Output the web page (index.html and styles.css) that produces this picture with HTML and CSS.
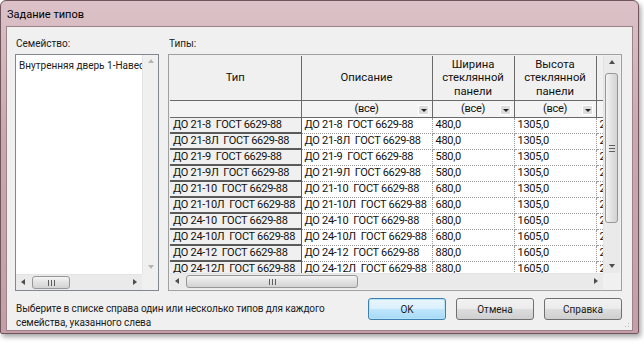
FILE: index.html
```html
<html>
  <head>
    <link rel="stylesheet" href="styles.css">
    <title>Задание типов</title>
  </head>
<body>
  <div class="window">
    <div class="titlebar">Задание типов</div>

    <div class="client">
      <div class="panes">

        <div class="family">
          <div class="label">Семейство:</div>
          <div class="listbox">
            <div class="list-items">
              <div class="list-item">Внутренняя дверь 1-Навесная</div>
            </div>
            <div class="vscroll off">
              <span class="arrow up"></span>
              <span class="track"></span>
              <span class="arrow down"></span>
            </div>
            <div class="hscroll">
              <span class="arrow left"></span>
              <span class="track"><span class="thumb" style="width: 38px"><span class="grip-v"></span></span></span>
              <span class="arrow right"></span>
            </div>
            <div class="corner"></div>
          </div>
        </div>

        <div class="types">
          <div class="label">Типы:</div>
          <div class="grid">
            <div class="grid-view">
              <table class="types-table">
                <colgroup>
                  <col class="c-type">
                  <col class="c-desc">
                  <col class="c-num">
                  <col class="c-num">
                  <col class="c-rest">
                </colgroup>
                <tr class="head">
                  <th>Тип</th>
                  <th>Описание</th>
                  <th>Ширина<br>стеклянной<br>панели</th>
                  <th>Высота<br>стеклянной<br>панели</th>
                  <th>Высота</th>
                </tr>
                <tr class="filter">
                  <td></td>
                  <td><span class="all">(все)</span><span class="drop"></span></td>
                  <td><span class="all">(все)</span><span class="drop"></span></td>
                  <td><span class="all">(все)</span><span class="drop"></span></td>
                  <td></td>
                </tr>
                <tbody id="rows"></tbody>
              </table>
            </div>
            <div class="vscroll">
              <span class="arrow up"></span>
              <span class="track"><span class="thumb-v"><span class="grip-h"></span></span></span>
              <span class="arrow down"></span>
            </div>
            <div class="hscroll">
              <span class="arrow left"></span>
              <span class="track"><span class="thumb" style="width: 172px"><span class="grip-v"></span></span></span>
              <span class="arrow right"></span>
            </div>
            <div class="corner"></div>
          </div>
        </div>

      </div>

      <div class="footer">
        <p class="hint">Выберите в списке справа один или несколько типов для каждого<br>семейства, указанного слева</p>
        <div class="buttons">
          <button class="btn default">OK</button>
          <button class="btn">Отмена</button>
          <button class="btn">Справка</button>
        </div>
      </div>
      <div class="sizegrip"></div>
    </div>
  </div>

  <script>
    // type rows: name, glass width, glass height, door height
    let types = [
      ["ДО 21-8", "480,0", "1305,0", "2071,0"],
      ["ДО 21-8Л", "480,0", "1305,0", "2071,0"],
      ["ДО 21-9", "580,0", "1305,0", "2071,0"],
      ["ДО 21-9Л", "580,0", "1305,0", "2071,0"],
      ["ДО 21-10", "680,0", "1305,0", "2071,0"],
      ["ДО 21-10Л", "680,0", "1305,0", "2071,0"],
      ["ДО 24-10", "680,0", "1605,0", "2371,0"],
      ["ДО 24-10Л", "680,0", "1605,0", "2371,0"],
      ["ДО 24-12", "880,0", "1605,0", "2371,0"],
      ["ДО 24-12Л", "880,0", "1605,0", "2371,0"]
    ];

    let rows = document.getElementById("rows");
    for (let t of types) {
      let name = t[0] + "\u00a0 ГОСТ 6629-88";
      let tr = document.createElement("tr");
      tr.innerHTML =
        "<td class='rowhead'>" + name + "</td>" +
        "<td>" + name + "</td>" +
        "<td>" + t[1] + "</td>" +
        "<td>" + t[2] + "</td>" +
        "<td>" + t[3] + "</td>";
      rows.appendChild(tr);
    }
  </script>
</body>
</html>
```

FILE: styles.css
```css
body {
  margin: 0;
  background: #ffffff;
  font-family: Roboto, "Liberation Sans", sans-serif;
  font-size: 10px;
  color: #1b1b1b;
}

.window {
  width: 637px;
  height: 332px;
  background: linear-gradient(180deg, #dcc2c8 0%, #cba7b0 40%, #c59ea8 100%);
  border: 1px solid #6f565d;
  border-radius: 6px 6px 2px 2px;
  box-shadow: 2px 3px 5px rgba(0, 0, 0, 0.35);
  display: flex;
  flex-direction: column;
}

.titlebar {
  height: 25px;
  line-height: 27px;
  padding-left: 6px;
  font-size: 11px;
  color: #000;
}

.client {
  position: relative;
  flex: 1;
  margin: 0 5px 5px 5px;
  background: #f0f0f0;
  border: 1px solid #9a8389;
  padding: 10px 10px 0 8px;
  display: flex;
  flex-direction: column;
}

.panes {
  display: flex;
  gap: 9px;
}

.label {
  height: 17px;
  padding-left: 1px;
  line-height: 14px;
}

.family {
  width: 144px;
}

.types {
  flex: 1;
}

/* list box */
.listbox {
  height: 235px;
  border: 1px solid #828790;
  background: #fff;
  display: grid;
  grid-template-columns: 1fr 16px;
  grid-template-rows: 1fr 16px;
}

.list-items {
  padding: 3px 3px;
  overflow: hidden;
  white-space: nowrap;
}

.list-item {
  line-height: 15px;
}

/* scrollbars */
.vscroll {
  background: #eaeaea;
  display: flex;
  flex-direction: column;
  border-left: 1px solid #e3e3e3;
}

.vscroll.off {
  background: #f0f0f0;
}

.hscroll {
  background: #eaeaea;
  display: flex;
  border-top: 1px solid #e3e3e3;
}

.corner {
  background: #f0f0f0;
}

.track {
  flex: 1;
  position: relative;
  display: flex;
}

.arrow {
  width: 16px;
  height: 16px;
  flex: none;
  position: relative;
}

.arrow::after {
  content: "";
  position: absolute;
  width: 0;
  height: 0;
  border: 3px solid transparent;
}

.arrow.up::after {
  left: 5px;
  top: 4px;
  border-bottom: 4px solid #4d4d4d;
  border-top-width: 0;
}

.arrow.down::after {
  left: 5px;
  top: 7px;
  border-top: 4px solid #4d4d4d;
  border-bottom-width: 0;
}

.arrow.left::after {
  left: 5px;
  top: 4px;
  border-right: 4px solid #4d4d4d;
  border-left-width: 0;
}

.arrow.right::after {
  left: 7px;
  top: 4px;
  border-left: 4px solid #4d4d4d;
  border-right-width: 0;
}

.vscroll.off .arrow.up::after {
  border-bottom-color: #b4b4b4;
}

.vscroll.off .arrow.down::after {
  border-top-color: #b4b4b4;
}

.thumb {
  height: 13px;
  margin-top: 1px;
  background: linear-gradient(180deg, #f4f4f4, #e2e2e2 50%, #d3d3d3);
  border: 1px solid #979797;
  border-radius: 3px;
  box-sizing: border-box;
  display: flex;
  align-items: center;
  justify-content: center;
}

.thumb-v {
  width: 13px;
  height: 150px;
  margin-left: 1px;
  margin-top: 1px;
  background: linear-gradient(90deg, #f4f4f4, #e2e2e2 50%, #d3d3d3);
  border: 1px solid #979797;
  border-radius: 3px;
  box-sizing: border-box;
  display: flex;
  align-items: center;
  justify-content: center;
}

.grip-v {
  width: 7px;
  height: 6px;
  background: repeating-linear-gradient(90deg, #5f5f5f 0 1px, transparent 1px 3px);
}

.grip-h {
  width: 6px;
  height: 7px;
  background: repeating-linear-gradient(180deg, #5f5f5f 0 1px, transparent 1px 3px);
}

/* types grid */
.grid {
  height: 233px;
  border: 1px solid #a0a0a0;
  padding: 1px;
  background: #f0f0f0;
  display: grid;
  grid-template-columns: 1fr 17px;
  grid-template-rows: 1fr 16px;
}

.grid-view {
  overflow: hidden;
  background: #fff;
}

.types-table {
  border-collapse: collapse;
  table-layout: fixed;
  width: 518px;
  font-size: 11px;
  letter-spacing: -0.3px;
  color: #111;
}

.c-type,
.c-desc {
  width: 131px;
}

.c-num {
  width: 82px;
}

.c-rest {
  width: 92px;
}

.types-table th {
  height: 44px;
  font-size: 11.3px;
  letter-spacing: 0;
  font-weight: normal;
  line-height: 13.5px;
  background: #f0f0f0;
  border: 1px solid #6a6a6a;
  border-top: none;
  padding: 0;
}

.types-table th:first-child {
  border-left: none;
}

.filter td {
  height: 17px;
  background: #f4f4f4;
  border: 1px solid #6a6a6a;
  border-top: none;
  position: relative;
  text-align: center;
  padding: 0;
  line-height: 14px;
}

.filter td:first-child {
  border-left: none;
}

.drop {
  position: absolute;
  right: 3px;
  top: 4px;
  width: 11px;
  height: 10px;
  background: #dcdcdc;
  border: 1px solid #fff;
  box-sizing: border-box;
}

.drop::after {
  content: "";
  position: absolute;
  left: 2px;
  top: 3px;
  border: 3px solid transparent;
  border-top: 3px solid #222;
  border-bottom-width: 0;
}

#rows tr {
  height: 16px;
}

#rows td {
  padding: 0 3px;
  white-space: nowrap;
  overflow: hidden;
  border-right: 1px dotted #9a9a9a;
  border-bottom: 1px dotted #9a9a9a;
  line-height: 14px;
}

#rows td.rowhead {
  background: #f0f0f0;
  border-right: 1px solid #5a5a5a;
  border-bottom: 2px solid #5a5a5a;
}

/* footer */
.footer {
  display: flex;
  align-items: flex-start;
  margin-top: 6px;
}

.hint {
  margin: 5px 0 0 1px;
  flex: 1;
  line-height: 14px;
  letter-spacing: -0.1px;
}

.buttons {
  display: flex;
  gap: 10px;
  padding-top: 1px;
}

.btn {
  width: 78px;
  height: 22px;
  font-family: Roboto, "Liberation Sans", sans-serif;
  font-size: 10px;
  color: #1b1b1b;
  background: linear-gradient(180deg, #f2f2f2 0%, #ebebeb 50%, #dddddd 51%, #cfcfcf 100%);
  border: 1px solid #707070;
  border-radius: 3px;
  padding: 0;
}

.btn.default {
  border-color: #3c7fb1;
  box-shadow: inset 0 0 0 1px #b7e3f8;
  background: linear-gradient(180deg, #eaf6fd 0%, #d9f0fc 50%, #bee6fd 51%, #a7d9f5 100%);
}

.sizegrip {
  position: absolute;
  right: 1px;
  bottom: 1px;
  width: 10px;
  height: 10px;
  background: radial-gradient(circle, #b8b8b8 0.7px, transparent 1px) 0 0 / 3px 3px;
  clip-path: polygon(100% 0, 100% 100%, 0 100%);
}
```
